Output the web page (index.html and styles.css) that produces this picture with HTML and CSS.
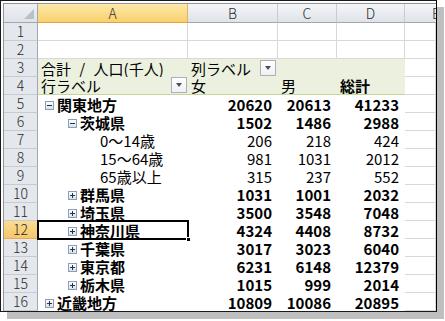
FILE: index.html
```html
<!DOCTYPE html>
<html lang="ja">
<head>
<meta charset="utf-8">
<link rel="stylesheet" href="styles.css">
</head>
<body>
<div class="page">
  <div class="window">
    <div class="sheet">
      <div class="corner"><span class="tri"></span></div>
      <div class="ch sel">A</div>
      <div class="ch">B</div>
      <div class="ch">C</div>
      <div class="ch">D</div>
      <div class="ch last">E</div>

      <div class="rh">1</div>
      <div class="c"></div><div class="c"></div><div class="c"></div><div class="c"></div><div class="c"></div>

      <div class="rh">2</div>
      <div class="c"></div><div class="c"></div><div class="c"></div><div class="c"></div><div class="c"></div>

      <div class="rh">3</div>
      <div class="ph"><span class="lbl title">合計 / 人口(千人)</span></div>
      <div class="ph"><span class="lbl">列ラベル</span><span class="dd"></span></div>
      <div class="ph"></div>
      <div class="ph"></div>
      <div class="c"></div>

      <div class="rh">4</div>
      <div class="ph hb"><span class="lbl">行ラベル</span><span class="dd"></span></div>
      <div class="ph hb"><span class="lbl">女</span></div>
      <div class="ph hb"><span class="lbl">男</span></div>
      <div class="ph hb"><span class="lbl b">総計</span></div>
      <div class="c"></div>

      <div class="rh">5</div>
      <div class="pv l0 b"><span class="box minus"></span>関東地方</div>
      <div class="pv num b">20620</div><div class="pv num b">20613</div><div class="pv num b">41233</div>
      <div class="c"></div>

      <div class="rh">6</div>
      <div class="pv l1 b"><span class="box minus"></span>茨城県</div>
      <div class="pv num b">1502</div><div class="pv num b">1486</div><div class="pv num b">2988</div>
      <div class="c"></div>

      <div class="rh">7</div>
      <div class="pv l2">0～14歳</div>
      <div class="pv num">206</div><div class="pv num">218</div><div class="pv num">424</div>
      <div class="c"></div>

      <div class="rh">8</div>
      <div class="pv l2">15～64歳</div>
      <div class="pv num">981</div><div class="pv num">1031</div><div class="pv num">2012</div>
      <div class="c"></div>

      <div class="rh">9</div>
      <div class="pv l2">65歳以上</div>
      <div class="pv num">315</div><div class="pv num">237</div><div class="pv num">552</div>
      <div class="c"></div>

      <div class="rh">10</div>
      <div class="pv l1 b"><span class="box plus"></span>群馬県</div>
      <div class="pv num b">1031</div><div class="pv num b">1001</div><div class="pv num b">2032</div>
      <div class="c"></div>

      <div class="rh">11</div>
      <div class="pv l1 b"><span class="box plus"></span>埼玉県</div>
      <div class="pv num b">3500</div><div class="pv num b">3548</div><div class="pv num b">7048</div>
      <div class="c"></div>

      <div class="rh sel">12</div>
      <div class="pv l1 b active"><span class="box plus"></span>神奈川県<span class="handle"></span></div>
      <div class="pv num b">4324</div><div class="pv num b">4408</div><div class="pv num b">8732</div>
      <div class="c"></div>

      <div class="rh">13</div>
      <div class="pv l1 b"><span class="box plus"></span>千葉県</div>
      <div class="pv num b">3017</div><div class="pv num b">3023</div><div class="pv num b">6040</div>
      <div class="c"></div>

      <div class="rh">14</div>
      <div class="pv l1 b"><span class="box plus"></span>東京都</div>
      <div class="pv num b">6231</div><div class="pv num b">6148</div><div class="pv num b">12379</div>
      <div class="c"></div>

      <div class="rh">15</div>
      <div class="pv l1 b"><span class="box plus"></span>栃木県</div>
      <div class="pv num b">1015</div><div class="pv num b">999</div><div class="pv num b">2014</div>
      <div class="c"></div>

      <div class="rh">16</div>
      <div class="pv l0 b"><span class="box plus"></span>近畿地方</div>
      <div class="pv num b">10809</div><div class="pv num b">10086</div><div class="pv num b">20895</div>
      <div class="c"></div>
    </div>
  </div>
</div>
</body>
</html>
```

FILE: styles.css
```css
* { box-sizing: border-box; }
html, body { margin: 0; padding: 0; background: #ffffff; }
body {
  font-family: "Noto Sans CJK JP", "Noto Sans", sans-serif;
  font-size: 15px;
  color: #000;
}
.page { width: 445px; height: 321px; overflow: hidden; }
.window {
  width: 437px;
  height: 312px;
  border: 1px solid #1a1a1a;
  border-right-color: #000;
  background: #fff;
  padding: 2px 0 0 2px;
  box-shadow: 7px 7px 0 #bfbfbf;
  overflow: hidden;
}
.sheet {
  display: grid;
  grid-template-columns: 34px 150px 90px 59px 68px 31px;
  grid-template-rows: 19px repeat(16, 18px);
  border-top: 1px solid #8e949c;
  border-left: 1px solid #8e949c;
  height: 309px;
}
.sheet > div {
  height: 100%;
  line-height: 17px;
  white-space: nowrap;
  display: flex;
  align-items: center;
}
.corner {
  background: linear-gradient(#eef0f3, #dfe3e8);
  border-right: 1px solid #9ea8b4;
  border-bottom: 1px solid #9ea8b4;
  position: relative;
}
.corner .tri {
  position: absolute;
  right: 3px;
  bottom: 3px;
  width: 0; height: 0;
  border-left: 10px solid transparent;
  border-bottom: 10px solid #b9c0c8;
}
.ch {
  justify-content: center;
  background: linear-gradient(#f4f6f8, #dfe3e8);
  border-right: 1px solid #c6ccd3;
  border-bottom: 1px solid #9ea8b4;
  color: #2b2b2b;
  font-size: 14px;
  font-weight: 300;
}
.ch.sel {
  background: linear-gradient(#fde9a9, #f9d06e);
  border-right-color: #e0b25a;
  border-bottom-color: #e8a23a;
}
.ch.last { border-right: none; justify-content: flex-start; padding-left: 27px; overflow: hidden; }
.rh {
  justify-content: center;
  background: #e4e7eb;
  border-right: 1px solid #9ea8b4;
  border-bottom: 1px solid #c6ccd3;
  color: #2b2b2b;
  font-size: 14px;
  font-weight: 300;
}
.rh.sel {
  background: linear-gradient(#fbdc93, #f6c769);
  border-bottom-color: #e0ad5a;
}
.c {
  border-right: 1px solid #d8d8d8;
  border-bottom: 1px solid #d8d8d8;
  background: #fff;
}
.ph {
  background: #ebf1de;
  position: relative;
}
.ph.hb { border-bottom: 1px solid #c4d79b; }
.lbl { padding-left: 3px; }
.title { word-spacing: 5px; }
.b { font-weight: 700; }
.dd {
  position: absolute;
  right: 2px;
  top: 1px;
  width: 16px;
  height: 16px;
  border: 1px solid #a9b1ba;
  background: linear-gradient(#ffffff, #eef0f2);
}
.dd::after {
  content: "";
  position: absolute;
  left: 4px;
  top: 5px;
  border-left: 3.5px solid transparent;
  border-right: 3.5px solid transparent;
  border-top: 4px solid #4a4f55;
}
.ph.hb .dd { right: 1px; top: 0; }
.pv { background: #fff; }
.pv.num { justify-content: flex-end; padding-right: 6px; }
.l0 { padding-left: 7px; }
.l1 { padding-left: 30px; }
.l2 { padding-left: 62px; }
.box {
  flex: none;
  width: 9px;
  height: 9px;
  margin-right: 3px;
  margin-top: 2px;
  border: 1px solid #8d9db3;
  background: linear-gradient(#ffffff, #d8e0ea);
  position: relative;
}
.box::before {
  content: "";
  position: absolute;
  left: 1px; top: 3px;
  width: 5px; height: 1px;
  background: #1f3350;
}
.box.plus::after {
  content: "";
  position: absolute;
  left: 3px; top: 1px;
  width: 1px; height: 5px;
  background: #1f3350;
}
.active { position: relative; }
.active::after {
  content: "";
  position: absolute;
  left: -1px; top: -1px; right: -1px; bottom: -1px;
  border: 2px solid #000;
  pointer-events: none;
}
.handle {
  position: absolute;
  right: -3px;
  bottom: -3px;
  width: 5px;
  height: 5px;
  background: #000;
  border: 1px solid #fff;
  z-index: 2;
}
```
